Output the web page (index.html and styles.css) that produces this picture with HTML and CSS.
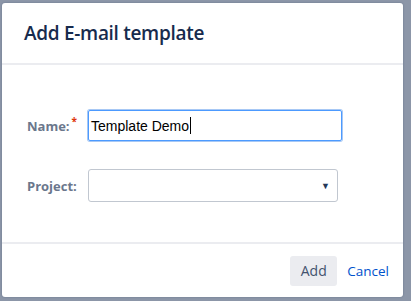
FILE: index.html
```html
<!DOCTYPE html>
<html lang="en">
<head>
    <meta charset="UTF-8">
    <title>Add E-mail template</title>
    <link rel="stylesheet" href="styles.css">
</head>
<body>
    <div class="dialog">
        <header class="dialog-header">
            <h2>Add E-mail template</h2>
        </header>
        <form class="dialog-body">
            <div class="field">
                <label for="name">Name:<span class="req">*</span></label>
                <div class="text" id="name">Template Demo<span class="caret"></span></div>
            </div>
            <div class="field">
                <label for="project">Project:</label>
                <div class="select" id="project">
                    <span class="arrow">&#9660;</span>
                </div>
            </div>
        </form>
        <footer class="dialog-footer">
            <button class="btn">Add</button>
            <a href="#" class="cancel">Cancel</a>
        </footer>
    </div>
</body>
</html>
```

FILE: styles.css
```css
body {
    margin: 0;
    background-color: #8c96a8;
    font-family: "Open Sans", "Noto Sans", Arial, sans-serif;
    color: #172b4d;
    height: 301px;
    overflow: hidden;
}
.dialog {
    margin: 3px 0 0 2px;
    width: 401px;
    height: 294px;
    background-color: white;
    border-radius: 3px;
    box-shadow: 0 0 2px rgba(9, 30, 66, 0.3);
    display: flex;
    flex-direction: column;
}
.dialog-header {
    height: 60px;
    border-bottom: 2px solid #ebecf0;
    display: flex;
    align-items: center;
    padding: 0 22px;
}
.dialog-header h2 {
    margin: 0;
    font-size: 19px;
    font-weight: 600;
    letter-spacing: -0.3px;
    color: #172b4d;
}
.dialog-body {
    flex: 1;
    padding: 44px 0 0 25px;
    margin: 0;
}
.field {
    display: flex;
    align-items: center;
    height: 33px;
    margin-bottom: 27px;
}
.field label {
    width: 61px;
    font-size: 13px;
    font-weight: bold;
    color: #6b778c;
}
.req {
    color: #de350b;
    font-size: 10px;
    position: relative;
    top: -6px;
    left: 2px;
}
.text {
    box-sizing: border-box;
    width: 254px;
    height: 31px;
    border: 1px solid #4c9aff;
    box-shadow: 0 0 0 1px #a7c8f5;
    border-radius: 2px;
    font-family: "Liberation Sans", Arial, sans-serif;
    font-size: 14px;
    padding: 0 2px;
    color: #000;
    display: flex;
    align-items: center;
}
.caret {
    display: inline-block;
    width: 1px;
    height: 17px;
    background-color: #000;
    margin-left: 1px;
}
.select {
    box-sizing: border-box;
    width: 250px;
    height: 33px;
    border: 1px solid #c1c7d0;
    border-radius: 3px;
    display: flex;
    align-items: center;
    justify-content: flex-end;
    padding-right: 7px;
}
.arrow {
    font-size: 9px;
    color: #253858;
}
.dialog-footer {
    height: 53px;
    border-top: 2px solid #ebecf0;
    display: flex;
    align-items: center;
    justify-content: flex-end;
    padding-right: 14px;
}
.btn {
    width: 47px;
    height: 30px;
    border: none;
    border-radius: 3px;
    background-color: #ebecf0;
    color: #42526e;
    font-family: inherit;
    font-size: 14px;
}
.cancel {
    margin-left: 10px;
    color: #0052cc;
    font-size: 13.5px;
    text-decoration: none;
}
```
